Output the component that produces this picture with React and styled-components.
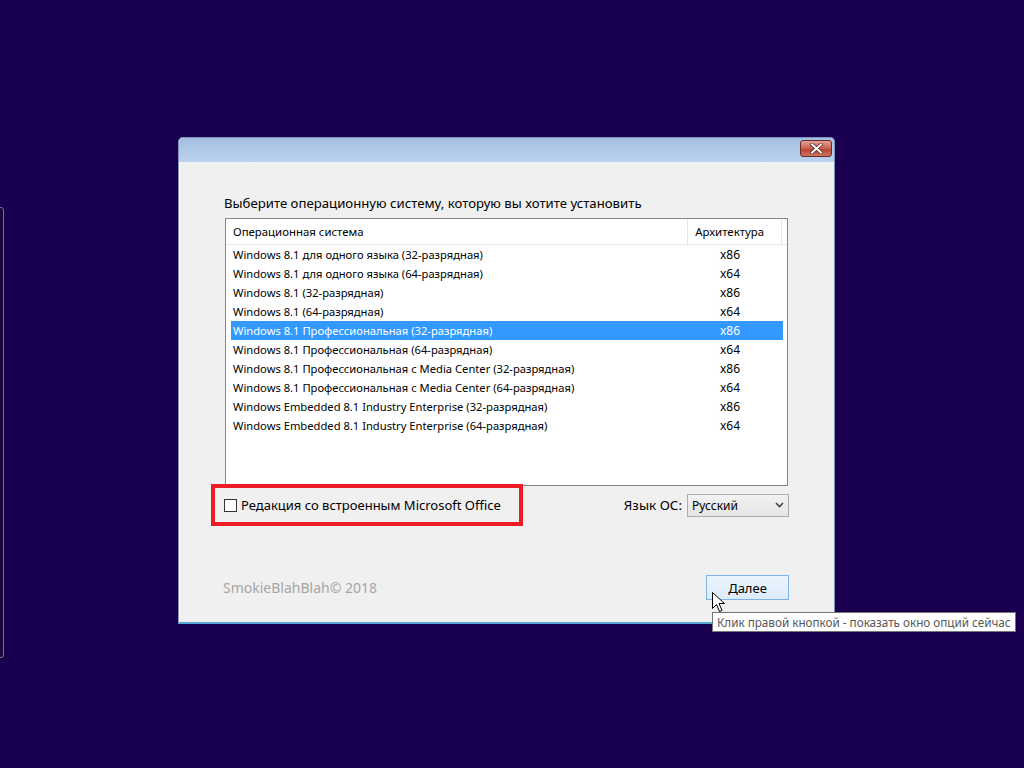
import React from 'react';
import styled, { createGlobalStyle } from 'styled-components';

const GlobalStyle = createGlobalStyle`
	html, body {
		margin: 0;
		padding: 0;
		background: #1b0051;
	}
	body {
		font-family: "Noto Sans", "Open Sans", sans-serif;
	}
`;

const systems = [
	{ name: 'Windows 8.1 для одного языка (32-разрядная)', arch: 'x86' },
	{ name: 'Windows 8.1 для одного языка (64-разрядная)', arch: 'x64' },
	{ name: 'Windows 8.1 (32-разрядная)', arch: 'x86' },
	{ name: 'Windows 8.1 (64-разрядная)', arch: 'x64' },
	{ name: 'Windows 8.1 Профессиональная (32-разрядная)', arch: 'x86', selected: true },
	{ name: 'Windows 8.1 Профессиональная (64-разрядная)', arch: 'x64' },
	{ name: 'Windows 8.1 Профессиональная с Media Center (32-разрядная)', arch: 'x86' },
	{ name: 'Windows 8.1 Профессиональная с Media Center (64-разрядная)', arch: 'x64' },
	{ name: 'Windows Embedded 8.1 Industry Enterprise (32-разрядная)', arch: 'x86' },
	{ name: 'Windows Embedded 8.1 Industry Enterprise (64-разрядная)', arch: 'x64' }
];

const Desktop = styled.div`
	position: relative;
	width: 1024px;
	height: 768px;
	overflow: hidden;
	background: #1b0051;
`;

const EdgeWindow = styled.div`
	position: absolute;
	left: -6px;
	top: 207px;
	width: 8px;
	height: 449px;
	border: 1px solid #77708a;
	border-radius: 3px;
	background: #1a0a3c;
`;

const Window = styled.div`
	position: absolute;
	left: 178px;
	top: 137px;
	width: 657px;
	height: 487px;
	box-sizing: border-box;
	border: 1px solid #7c95b8;
	border-top-left-radius: 5px;
	border-top-right-radius: 5px;
	display: flex;
	flex-direction: column;
	overflow: hidden;
	background: #f0f0f0;
	border-bottom: 2px solid #58a6d6;
`;

const TitleBar = styled.div`
	height: 24px;
	flex-shrink: 0;
	background: linear-gradient(#a4bfe1, #bcd3ee);
	display: flex;
	justify-content: flex-end;
	align-items: flex-start;
	padding: 2px 2px 0 0;
	box-sizing: border-box;
`;

const CloseButton = styled.div`
	width: 32px;
	height: 17px;
	box-sizing: border-box;
	border: 1px solid #6b2a2a;
	border-radius: 3px;
	background: linear-gradient(#e3a294, #c9604d 50%, #b8412c 51%, #d07462);
	display: flex;
	align-items: center;
	justify-content: center;
`;

const Body = styled.div`
	flex: 1;
	display: flex;
	flex-direction: column;
	padding: 33px 46px 0 45px;
	border-left: 1px solid #ffffff;
`;

const Prompt = styled.div`
	font-size: 13.2px;
	color: #000;
	line-height: 16px;
	margin-bottom: 7px;
	margin-left: -1px;
`;

const ListView = styled.div`
	height: 268px;
	box-sizing: border-box;
	border: 1px solid #828790;
	background: #ffffff;
	display: flex;
	flex-direction: column;
`;

const HeaderRow = styled.div`
	display: flex;
	height: 25px;
	align-items: center;
	border-bottom: 1px solid #e5e5e5;
	font-size: 11.4px;
	color: #000;
`;

const HeaderCell = styled.div`
	width: ${(p) => p.w}px;
	height: 100%;
	display: flex;
	align-items: center;
	box-sizing: border-box;
	padding-left: ${(p) => p.pad}px;
	border-right: ${(p) => (p.last ? 'none' : '1px solid #e5e5e5')};
`;

const Rows = styled.div`
	padding-left: 5px;
`;

const Row = styled.div`
	display: flex;
	height: 19px;
	width: 552px;
	align-items: center;
	font-size: 11.2px;
	background: ${(p) => (p.selected ? '#3399ff' : 'transparent')};
	color: ${(p) => (p.selected ? '#ffffff' : '#000000')};
`;

const NameCell = styled.div`
	width: 458px;
	padding-left: 2px;
	white-space: nowrap;
`;

const ArchCell = styled.div`
	padding-left: 29px;
	font-size: 12px;
`;

const OptionsRow = styled.div`
	display: flex;
	align-items: center;
	justify-content: space-between;
	margin-top: -2px;
`;

const Highlight = styled.label`
	display: flex;
	align-items: center;
	width: 312px;
	height: 42px;
	box-sizing: border-box;
	border: 4px solid #ed1c24;
	margin-left: -14px;
	padding-left: 9px;
	font-size: 13px;
	color: #000;
	gap: 4px;
`;

const CheckBox = styled.span`
	width: 13px;
	height: 13px;
	box-sizing: border-box;
	border: 1px solid #333333;
	background: #ffffff;
`;

const LangGroup = styled.div`
	display: flex;
	align-items: center;
	gap: 5px;
	font-size: 13.4px;
	color: #000;
	margin-right: -1px;
`;

const Select = styled.div`
	width: 102px;
	height: 23px;
	box-sizing: border-box;
	border: 1px solid #acacac;
	background: linear-gradient(#f2f2f2, #e5e5e5);
	display: flex;
	align-items: center;
	justify-content: space-between;
	padding: 0 4px 0 4px;
	font-size: 12px;
`;

const Footer = styled.div`
	display: flex;
	align-items: center;
	justify-content: space-between;
	margin-top: 49px;
`;

const Copyright = styled.div`
	font-size: 14px;
	color: #a6a6a6;
	margin-left: -2px;
`;

const NextButton = styled.div`
	width: 83px;
	height: 25px;
	box-sizing: border-box;
	border: 1px solid #7eb4ea;
	background: linear-gradient(#ecf4fc, #dcecfc);
	display: flex;
	align-items: center;
	justify-content: center;
	font-size: 13px;
	color: #000;
	margin-right: -1px;
`;

const Tooltip = styled.div`
	position: absolute;
	left: 712px;
	top: 612px;
	height: 20px;
	box-sizing: border-box;
	border: 1px solid #767676;
	background: #ffffff;
	color: #575757;
	font-size: 11.7px;
	padding: 0 4px;
	display: flex;
	align-items: center;
	white-space: nowrap;
`;

const Cursor = styled.svg`
	position: absolute;
	left: 712px;
	top: 592px;
`;

const Chevron = () => (
	<svg width="9" height="6" viewBox="0 0 9 6">
		<path d="M1 1 L4.5 4.5 L8 1" fill="none" stroke="#444" strokeWidth="1.6" />
	</svg>
);

const CloseGlyph = () => (
	<svg width="13" height="11" viewBox="0 0 13 11">
		<path d="M2 1.5 L11 9.5 M11 1.5 L2 9.5" stroke="#5a2020" strokeWidth="3.6" strokeLinecap="square" />
		<path d="M2 1.5 L11 9.5 M11 1.5 L2 9.5" stroke="#ffffff" strokeWidth="2" strokeLinecap="square" />
	</svg>
);

export default function App() {
	return (
		<Desktop>
			<GlobalStyle />
			<EdgeWindow />
			<Window>
				<TitleBar>
					<CloseButton>
						<CloseGlyph />
					</CloseButton>
				</TitleBar>
				<Body>
					<Prompt>Выберите операционную систему, которую вы хотите установить</Prompt>
					<ListView>
						<HeaderRow>
							<HeaderCell w={464} pad={7}>Операционная система</HeaderCell>
							<HeaderCell w={94} pad={7}>Архитектура</HeaderCell>
							<HeaderCell w={5} pad={0} last />
						</HeaderRow>
						<Rows>
							{systems.map((s) => (
								<Row key={s.name} selected={s.selected}>
									<NameCell>{s.name}</NameCell>
									<ArchCell>{s.arch}</ArchCell>
								</Row>
							))}
						</Rows>
					</ListView>
					<OptionsRow>
						<Highlight>
							<CheckBox />
							Редакция со встроенным Microsoft Office
						</Highlight>
						<LangGroup>
							Язык ОС:
							<Select>
								Русский
								<Chevron />
							</Select>
						</LangGroup>
					</OptionsRow>
					<Footer>
						<Copyright>SmokieBlahBlah© 2018</Copyright>
						<NextButton>Далее</NextButton>
					</Footer>
				</Body>
			</Window>
			<Cursor width="13" height="21" viewBox="0 0 13 21">
				<path d="M0.5 0.5 L0.5 16.5 L4.5 12.5 L7.5 19.5 L10 18.5 L7 11.5 L12.5 11.5 Z" fill="#ffffff" stroke="#000000" strokeWidth="1" />
			</Cursor>
			<Tooltip>Клик правой кнопкой - показать окно опций сейчас</Tooltip>
		</Desktop>
	);
}
